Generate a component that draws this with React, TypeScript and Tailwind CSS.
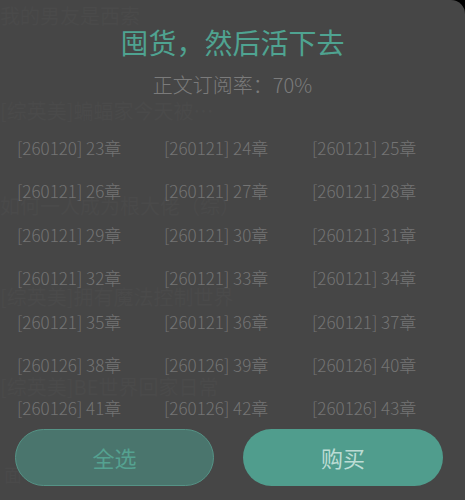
import React from "react";

const chapters = [
  ["260120", 23],
  ["260121", 24],
  ["260121", 25],
  ["260121", 26],
  ["260121", 27],
  ["260121", 28],
  ["260121", 29],
  ["260121", 30],
  ["260121", 31],
  ["260121", 32],
  ["260121", 33],
  ["260121", 34],
  ["260121", 35],
  ["260121", 36],
  ["260121", 37],
  ["260126", 38],
  ["260126", 39],
  ["260126", 40],
  ["260126", 41],
  ["260126", 42],
  ["260126", 43],
] as const;

// faint book list that shows through the overlay
const behind = [
  { text: "我的男友是西索", top: "top-[3px]" },
  { text: "[综英美]蝙蝠家今天被…", top: "top-[98px]" },
  { text: "如何一人成为根大佬（综）", top: "top-[193px]" },
  { text: "[综英美]拥有魔法控制世界", top: "top-[284px]" },
  { text: "[综英美]BE世界回家日常", top: "top-[374px]" },
];

export default function App() {
  return (
    <div
      className="w-[465px] h-[500px] bg-black overflow-hidden"
      style={{ fontFamily: '"Noto Sans CJK SC", "Noto Sans", sans-serif' }}
    >
      <div className="relative w-full h-full bg-[#464646] rounded-tr-[14px] overflow-hidden">
        {/* backdrop */}
        <div className="absolute inset-0 pointer-events-none" aria-hidden="true">
          {behind.map((b) => (
            <div
              key={b.text}
              className={`absolute left-0 ${b.top} text-[20px] leading-[26px] text-[#4a4a4a] whitespace-nowrap`}
            >
              {b.text}
            </div>
          ))}
          <div className="absolute left-[4px] top-[463px] text-[18px] leading-[22px] text-[#4a4a4a]">
            面
          </div>
        </div>

        {/* dialog content */}
        <div className="relative flex flex-col items-center h-full">
          <h1 className="mt-[26px] text-[28px] leading-[32px] text-[#4fa391]">
            囤货，然后活下去
          </h1>
          <p className="mt-[13px] text-[20px] leading-[28px] font-light text-[#7b7b7b]">
            正文订阅率：70%
          </p>

          <div className="mt-[27px] w-full h-[292px] overflow-hidden">
            <div className="grid grid-cols-[147px_148px_1fr] pl-[17px]">
              {chapters.map(([date, n], i) => (
                <div
                  key={i}
                  className="h-[43.4px] flex items-center text-[17px] font-light text-[#747474] whitespace-nowrap"
                >
                  [{date}] {n}章
                </div>
              ))}
            </div>
          </div>

          <div className="mt-[11px] w-full flex justify-between px-[15px] pr-[22px]">
            <button className="w-[199px] h-[57px] rounded-full bg-[#4a756d] border border-[#559386] text-[22px] text-[#55a291]">
              全选
            </button>
            <button className="w-[200px] h-[57px] rounded-full bg-[#509d8d] text-[22px] text-[#bcdcd4]">
              购买
            </button>
          </div>
        </div>
      </div>
    </div>
  );
}
